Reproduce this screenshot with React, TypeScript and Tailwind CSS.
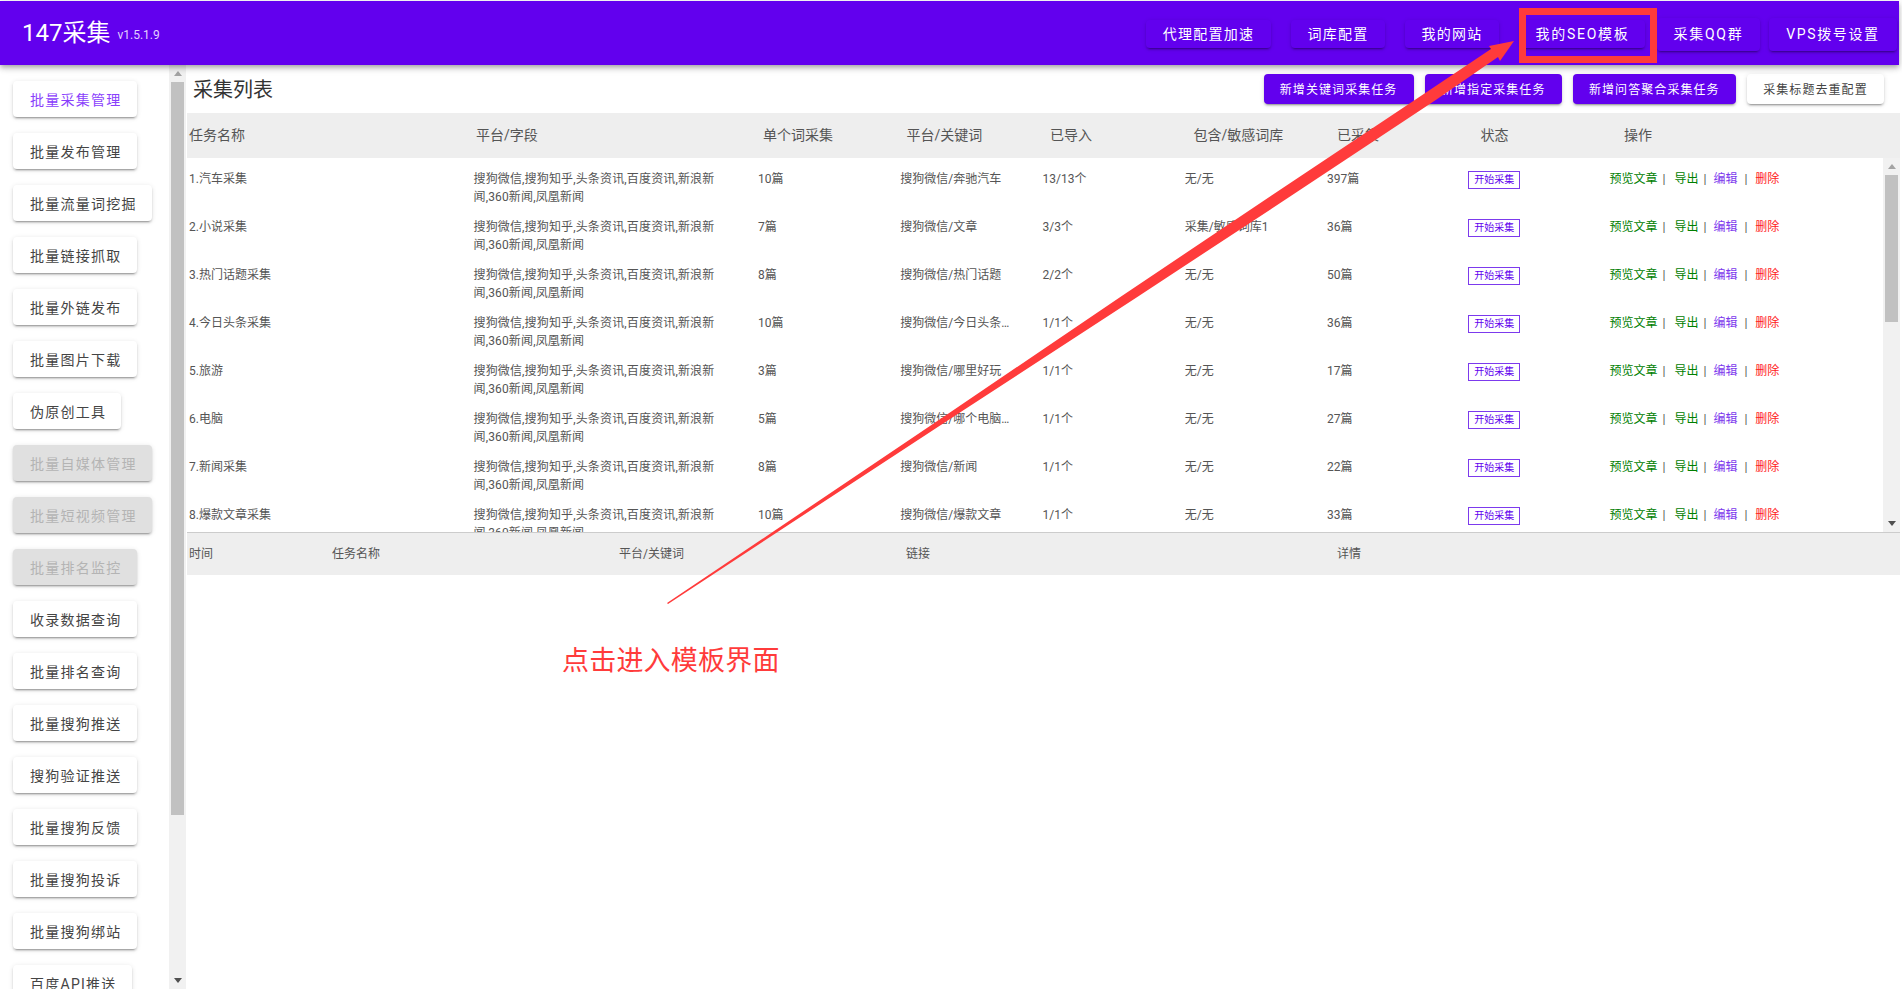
const navItems = [
  { label: '代理配置加速', cls: 'w-[125px] h-[28px] mr-[20px] tracking-[1.25px]' },
  { label: '词库配置', cls: 'w-[94px] h-[28px] mr-[20px] tracking-[1.25px]' },
  { label: '我的网站', cls: 'w-[94px] h-[28px] mr-[21px] tracking-[1.25px]' },
  { label: '我的SEO模板', cls: 'w-[125px] h-[28px] mr-[12px] tracking-[1.7px]' },
  { label: '采集QQ群', cls: 'w-[103px] h-[33px] mr-[9px] tracking-[1.7px]' },
  { label: 'VPS拨号设置', cls: 'w-[128px] h-[33px] tracking-[1.6px]' },
];

const sideItems = [
  { label: '批量采集管理', state: 'active' },
  { label: '批量发布管理' },
  { label: '批量流量词挖掘' },
  { label: '批量链接抓取' },
  { label: '批量外链发布' },
  { label: '批量图片下载' },
  { label: '伪原创工具' },
  { label: '批量自媒体管理', state: 'disabled' },
  { label: '批量短视频管理', state: 'disabled' },
  { label: '批量排名监控', state: 'disabled' },
  { label: '收录数据查询' },
  { label: '批量排名查询' },
  { label: '批量搜狗推送' },
  { label: '搜狗验证推送' },
  { label: '批量搜狗反馈' },
  { label: '批量搜狗投诉' },
  { label: '批量搜狗绑站' },
  { label: '百度API推送' },
];

const tasks = [
  ['1.汽车采集', '10篇', '搜狗微信/奔驰汽车', '13/13个', '无/无', '397篇'],
  ['2.小说采集', '7篇', '搜狗微信/文章', '3/3个', '采集/敏感词库1', '36篇'],
  ['3.热门话题采集', '8篇', '搜狗微信/热门话题', '2/2个', '无/无', '50篇'],
  ['4.今日头条采集', '10篇', '搜狗微信/今日头条新闻', '1/1个', '无/无', '36篇'],
  ['5.旅游', '3篇', '搜狗微信/哪里好玩', '1/1个', '无/无', '17篇'],
  ['6.电脑', '5篇', '搜狗微信/哪个电脑最好', '1/1个', '无/无', '27篇'],
  ['7.新闻采集', '8篇', '搜狗微信/新闻', '1/1个', '无/无', '22篇'],
  ['8.爆款文章采集', '10篇', '搜狗微信/爆款文章', '1/1个', '无/无', '33篇'],
];

const shadow =
  'shadow-[0_3px_1px_-2px_rgba(0,0,0,.2),0_2px_2px_0_rgba(0,0,0,.14),0_1px_5px_0_rgba(0,0,0,.12)]';

const Scrollbar = ({ thumb, upColor }: { thumb: string; upColor: string }) => (
  <div className="w-[17px] h-full shrink-0 bg-[#f1f1f1] flex flex-col">
    <div className="h-[17px] flex items-center justify-center">
      <svg width="8" height="5" viewBox="0 0 8 5">
        <polygon points="4,0 8,5 0,5" fill={upColor} />
      </svg>
    </div>
    <div className={`w-[13px] ml-[2px] bg-[#c1c1c1] ${thumb}`} />
    <div className="flex-1" />
    <div className="h-[17px] flex items-center justify-center">
      <svg width="8" height="5" viewBox="0 0 8 5">
        <polygon points="0,0 8,0 4,5" fill="#505050" />
      </svg>
    </div>
  </div>
);

const SideButton = ({ label, state }: { label: string; state?: string }) => {
  let look = 'bg-white text-[#444]';
  if (state === 'active') look = 'bg-white text-[#8a3ffc]';
  if (state === 'disabled') look = 'bg-[#e0e0e0] text-[#b4b4b4]';
  return (
    <div
      className={`self-start shrink-0 h-[36px] pl-[17px] pr-[15px] pt-px flex items-center rounded text-sm tracking-[1.25px] whitespace-nowrap ${look} ${shadow}`}
    >
      {label}
    </div>
  );
};

const ActionButton = ({ label, light }: { label: string; light?: boolean }) => (
  <div
    className={`h-[30px] px-[16.25px] pt-px flex items-center rounded text-xs tracking-[1.07px] whitespace-nowrap ${
      light ? 'bg-white text-[#444]' : 'bg-[#6200ee] text-white'
    } ${shadow}`}
  >
    {label}
  </div>
);

export default function App() {
  return (
    <div className="relative h-screen overflow-hidden bg-white flex flex-col pr-[2px] [font-family:Roboto,'Noto_Sans_CJK_SC',sans-serif]">
      <header className="relative z-10 mt-px h-[64px] shrink-0 mr-px bg-[#6200ee] flex items-center justify-between pl-[22px] pr-[2px] shadow-[0_2px_4px_-1px_rgba(0,0,0,.2),0_4px_5px_0_rgba(0,0,0,.14),0_1px_10px_0_rgba(0,0,0,.12)]">
        <div className="flex items-center text-white">
          <span className="text-2xl">147采集</span>
          <span className="ml-[7px] mt-1 text-xs text-[#e2d0ff]">v1.5.1.9</span>
        </div>
        <nav className="flex items-center pt-[2px]">
          {navItems.map((n) => (
            <div
              key={n.label}
              className={`flex items-center justify-center rounded text-sm text-white whitespace-nowrap bg-[#6200ee] ${shadow} ${n.cls}`}
            >
              {n.label}
            </div>
          ))}
        </nav>
      </header>

      <div className="flex-1 min-h-0 flex">
        <aside className="w-[169px] shrink-0 overflow-hidden flex flex-col gap-4 pt-4 pl-[13px]">
          {sideItems.map((s) => (
            <SideButton key={s.label} label={s.label} state={s.state} />
          ))}
        </aside>
        <Scrollbar thumb="h-[733px]" upColor="#a3a3a3" />

        <main className="flex-1 min-w-0 ml-px flex flex-col">
          <div className="h-[48px] shrink-0 flex items-center justify-between pl-[6px] pr-[16px]">
            <h1 className="mt-px text-xl text-[#333]">采集列表</h1>
            <div className="flex items-center gap-[11px]">
              <ActionButton label="新增关键词采集任务" />
              <ActionButton label="新增指定采集任务" />
              <ActionButton label="新增问答聚合采集任务" />
              <ActionButton label="采集标题去重配置" light />
            </div>
          </div>

          <div className="h-[45px] shrink-0 bg-[#eeeeee] pb-[2px] pl-[2px] grid grid-cols-[287px_287px_repeat(6,143.5px)_1fr] items-center text-sm text-[#555]">
            <div>任务名称</div>
            <div>平台/字段</div>
            <div>单个词采集</div>
            <div>平台/关键词</div>
            <div>已导入</div>
            <div>包含/敏感词库</div>
            <div>已采集</div>
            <div>状态</div>
            <div>操作</div>
          </div>

          <div className="h-[374px] shrink-0 flex">
            <div className="flex-1 min-w-0 overflow-hidden">
              {tasks.map((t) => (
                <div
                  key={t[0]}
                  className="h-[48px] pt-3 pl-[2px] grid grid-cols-[284.5px_284.5px_repeat(6,142.25px)_1fr] items-start text-xs leading-[18px] text-[#555]"
                >
                  <div>{t[0]}</div>
                  <div className="w-[250px] tracking-[0.15px]">搜狗微信,搜狗知乎,头条资讯,百度资讯,新浪新闻,360新闻,凤凰新闻</div>
                  <div>{t[1]}</div>
                  <div className="w-[110px] truncate">{t[2]}</div>
                  <div>{t[3]}</div>
                  <div>{t[4]}</div>
                  <div>{t[5]}</div>
                  <div className="mt-px -ml-px w-[52px] h-[18px] border border-[#7c3aed] flex items-center justify-center text-[10px] text-[#6200ee]">
                    开始采集
                  </div>
                  <div className="-ml-[2px] flex whitespace-nowrap">
                    <span className="text-[#008000]">预览文章</span>
                    <span className="ml-[5px] mr-[9px]">|</span>
                    <span className="text-[#008000]">导出</span>
                    <span className="ml-[5px] mr-[7px]">|</span>
                    <span className="text-[#7c3aed]">编辑</span>
                    <span className="ml-[7px] mr-[8px]">|</span>
                    <span className="text-[#ff2020]">删除</span>
                  </div>
                </div>
              ))}
            </div>
            <Scrollbar thumb="h-[147px]" upColor="#a3a3a3" />
          </div>

          <div className="h-[43px] shrink-0 border-t border-[#cccccc] bg-[#eeeeee] pl-[2px] grid grid-cols-[143px_287px_287px_431px_1fr] items-center text-xs text-[#555]">
            <div>时间</div>
            <div>任务名称</div>
            <div>平台/关键词</div>
            <div>链接</div>
            <div>详情</div>
          </div>
        </main>
      </div>

      {/* red annotations drawn on top of the screenshot */}
      <svg className="absolute inset-0 z-20 pointer-events-none" width="1902" height="989" viewBox="0 0 1902 989">
        <polygon
          points="667,603 772.6,532 949.2,413 1120.3,297 1269.3,197 1414.8,100 1491,49 1489,46 1514,41 1500,61 1498,57 1435.8,100 1289.3,197 1137.3,297 959.2,413 777.6,532 668,604"
          fill="#ff3b3b"
        />
      </svg>
      <div className="absolute z-20 left-[1519px] top-[8px] w-[138px] h-[55px] border-[7px] border-[#ff3b3b]" />
      <div className="absolute z-20 left-[562px] top-[640px] text-[27px] tracking-[0.2px] leading-[38px] text-[#ff3b3b] [font-family:'Noto_Sans_CJK_SC',sans-serif]">
        点击进入模板界面
      </div>
    </div>
  );
}
